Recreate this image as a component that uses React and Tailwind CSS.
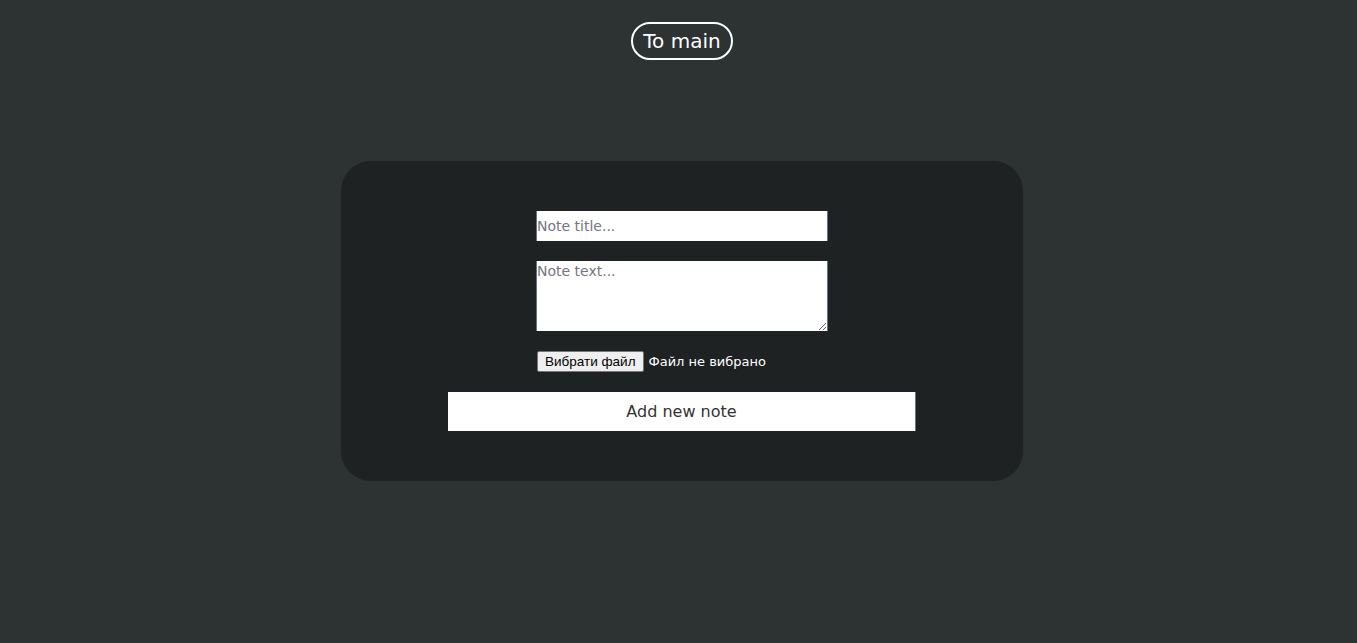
export default function App() {
  return (
    <div className="w-full min-h-screen bg-[#2c3332] flex flex-col items-center pt-[22px] pl-[7px] font-['DejaVu_Sans',sans-serif]">
      {/* Back link */}
      <a
        href="#"
        className="h-[38px] px-[10px] flex items-center border-2 border-white rounded-full text-white text-[20px] leading-none"
      >
        To main
      </a>

      {/* Form card */}
      <div className="mt-[101px] w-[682px] h-[320px] rounded-[30px] bg-[#1e2222] flex flex-col items-center pt-[50px]">
        <input
          type="text"
          placeholder="Note title..."
          className="w-[292px] h-[30px] bg-white border-x border-gray-500 px-0 text-[14px] text-black placeholder:text-[#75757f] outline-none"
        />
        <textarea
          placeholder="Note text..."
          className="mt-[20px] w-[292px] h-[70px] bg-white border-x border-gray-500 p-0 text-[14px] text-black placeholder:text-[#75757f] outline-none"
        />
        <div className="mt-[20px] w-[292px] h-[21px] flex items-center">
          <button className="ml-[1px] h-[21px] px-[7px] bg-[#efefef] border border-[#767676] rounded-[2px] text-[13.5px] text-black font-['Liberation_Sans',sans-serif] leading-none">
            Вибрати файл
          </button>
          <span className="ml-[5px] text-[13px] text-white">Файл не вибрано</span>
        </div>
        <button className="mt-[20px] w-[468px] h-[39px] bg-white border-r border-gray-500 text-[16px] text-[#333]">
          Add new note
        </button>
      </div>
    </div>
  );
}
